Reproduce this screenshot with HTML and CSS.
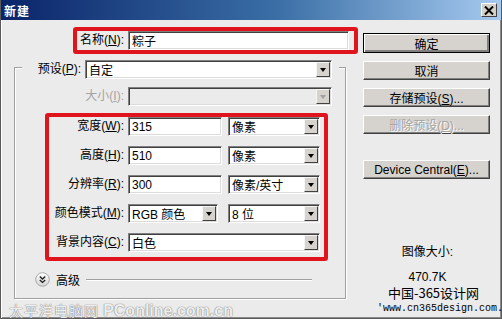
FILE: index.html
```html
<!DOCTYPE html>
<html lang="zh-CN">
<head>
  <meta charset="UTF-8"/>
  <title>新建</title>
  <link rel="stylesheet" href="styles.css">
</head>
<body>
  <div class="window">
    <div class="titlebar">
      <span class="title">新建</span>
      <span class="close">
        <svg width="10" height="9" viewBox="0 0 10 9"><path d="M1 0.5 L9 8.5 M9 0.5 L1 8.5" stroke="#000" stroke-width="2"/></svg>
      </span>
    </div>

    <div class="content">
      <div class="main">
        <div class="name-box">
          <label class="lbl name-lbl">名称(<u>N</u>):</label>
          <div class="field name-field">粽子</div>
        </div>

        <div class="group">
          <div class="preset-row">
            <label class="lbl preset-lbl">预设(<u>P</u>):</label>
            <div class="select preset-select"><span>自定</span><i class="arrow"></i></div>
          </div>

          <div class="row size-row">
            <label class="lbl size-lbl disabled">大小(<u>I</u>):</label>
            <div class="select size-select off"><span></span><i class="arrow"></i></div>
          </div>

          <div class="red-box">
            <div class="row">
              <label class="lbl">宽度(<u>W</u>):</label>
              <div class="field num">315</div>
              <div class="select unit"><span>像素</span><i class="arrow"></i></div>
            </div>
            <div class="row">
              <label class="lbl">高度(<u>H</u>):</label>
              <div class="field num">510</div>
              <div class="select unit"><span>像素</span><i class="arrow"></i></div>
            </div>
            <div class="row">
              <label class="lbl">分辨率(<u>R</u>):</label>
              <div class="field num">300</div>
              <div class="select unit"><span>像素/英寸</span><i class="arrow"></i></div>
            </div>
            <div class="row">
              <label class="lbl">颜色模式(<u>M</u>):</label>
              <div class="select mode"><span>RGB 颜色</span><i class="arrow"></i></div>
              <div class="select unit"><span>8 位</span><i class="arrow"></i></div>
            </div>
            <div class="row">
              <label class="lbl">背景内容(<u>C</u>):</label>
              <div class="select wide"><span>白色</span><i class="arrow"></i></div>
            </div>
          </div>

          <div class="advanced">
            <svg class="adv-icon" width="15" height="15" viewBox="0 0 15 15">
              <defs>
                <linearGradient id="g" x1="0" y1="0" x2="0" y2="1">
                  <stop offset="0" stop-color="#ffffff"/>
                  <stop offset="1" stop-color="#d2d2d2"/>
                </linearGradient>
              </defs>
              <circle cx="7.5" cy="7.5" r="6.8" fill="url(#g)" stroke="#a8a8a8"/>
              <path d="M4.8 4.6 L7.5 7 L10.2 4.6 M4.8 8 L7.5 10.4 L10.2 8" fill="none" stroke="#222" stroke-width="1.4"/>
            </svg>
            <span class="adv-text">高级</span>
            <span class="adv-line"></span>
          </div>
        </div>
      </div>

      <div class="side">
        <button class="btn default">确定</button>
        <button class="btn">取消</button>
        <button class="btn">存储预设(<u>S</u>)...</button>
        <button class="btn" disabled>删除预设(<u>D</u>)...</button>
        <button class="btn device">Device Central(<u>E</u>)...</button>

        <div class="info">
          <div class="info-title">图像大小:</div>
          <div class="info-size">470.7K</div>
          <div class="mark-cn">中国-365设计网</div>
          <div class="mark-url">'www.cn365design.com.</div>
        </div>
      </div>

      <div class="watermark">太平洋电脑网 <b>PConline.com.cn</b></div>
    </div>
  </div>
</body>
</html>
```

FILE: styles.css
```css
:root {
  --face: #ebebeb;
  --btn-face: #d6d3ce;
  --red: #e0141c;
  --ui-font: 12px "Liberation Sans", "Noto Sans CJK SC", sans-serif;
}

*, *::before, *::after { box-sizing: border-box; }

body {
  margin: 0;
  background: var(--face);
  font: var(--ui-font);
  color: #000;
}

u { text-decoration: underline; text-underline-offset: 1px; }

.window {
  width: 502px;
  height: 319px;
  background: var(--face);
  border: 1px solid #5a5a5a;
  border-top: 0;
  box-shadow: inset 1px 0 0 #fff, inset -1px -1px 0 #8a8a8a;
  overflow: hidden;
}

/* title bar */
.titlebar {
  height: 20px;
  display: flex;
  align-items: center;
  justify-content: space-between;
  padding: 0 4px 0 3px;
  background: linear-gradient(to right, #0a246a 0%, #3a6ea5 55%, #a6caf0 100%);
}

.title {
  color: #fff;
  font-weight: bold;
  font-size: 12px;
  letter-spacing: 1px;
}

.close {
  width: 16px;
  height: 14px;
  display: flex;
  align-items: center;
  justify-content: center;
  background: #d4d0c8;
  border: 1px solid;
  border-color: #fff #404040 #404040 #fff;
}

/* body */
.content {
  position: relative;
  display: flex;
  height: 298px;
}

.main { width: 360px; }

.lbl {
  text-align: right;
  white-space: nowrap;
  padding-right: 4px;
  line-height: 19px;
}

.disabled { color: #a3a3a3; }

.field, .select {
  height: 19px;
  background: #fff;
  border: 1px solid;
  border-color: #808080 #fff #fff #808080;
  box-shadow: inset 1px 1px 0 #404040, inset -1px -1px 0 #dcdcdc;
  display: flex;
  align-items: center;
  padding-left: 3px;
  white-space: nowrap;
}

.select { padding-right: 1px; }

.arrow {
  margin-left: auto;
  width: 14px;
  height: 15px;
  background: var(--btn-face);
  border: 1px solid;
  border-color: #f6f6f6 #404040 #404040 #f6f6f6;
  display: flex;
  align-items: center;
  justify-content: center;
}

.arrow::after {
  content: "";
  border-left: 3.5px solid transparent;
  border-right: 3.5px solid transparent;
  border-top: 4px solid #000;
}

.select.off { background: var(--face); }
.select.off .arrow::after { border-top-color: #a0a0a0; }

/* name */
.name-box {
  margin: 7px 0 0 72px;
  width: 285px;
  height: 27px;
  border: 4px solid var(--red);
  border-radius: 3px;
  display: flex;
  align-items: center;
}

.name-lbl { width: 51px; }
.name-field { width: 221px; }

/* group */
.group {
  margin: 13px 0 0 13px;
  width: 332px;
  height: 232px;
  border: 1px solid #a0a0a0;
  box-shadow: 1px 1px 0 #fff, inset 1px 1px 0 #fff;
}

.preset-row {
  display: flex;
  margin: -8px 6px 0 7px;
  background: var(--face);
  position: relative;
}

.preset-lbl { width: 63px; }
.preset-select { width: 247px; }

.row { display: flex; }

.size-row { margin-top: 8px; }
.size-lbl { width: 113px; }
.size-select { width: 204px; }

.red-box {
  margin: 7px 0 0 30px;
  width: 283px;
  border: 4px solid var(--red);
  border-radius: 3px;
  padding: 0 0 5px;
  display: flex;
  flex-direction: column;
  gap: 10px;
}

.red-box .lbl { width: 79px; }
.red-box .num { width: 94px; }
.red-box .unit { width: 92px; margin-left: 6px; }
.red-box .mode { width: 90px; }
.red-box .mode + .unit { margin-left: 10px; }
.red-box .wide { width: 192px; }

.advanced {
  display: flex;
  align-items: center;
  margin: 10px 33px 0 20px;
}

.adv-text { margin-left: 6px; }

.adv-line {
  flex: 1;
  margin-left: 6px;
  height: 1px;
  background: #a0a0a0;
  box-shadow: 0 1px 0 #fff;
}

/* buttons */
.side {
  width: 127px;
  margin-left: 2px;
  padding-top: 13px;
  display: flex;
  flex-direction: column;
}

.btn {
  font: var(--ui-font);
  height: 19px;
  padding: 0;
  margin-bottom: 8px;
  background: var(--btn-face);
  border: 1px solid;
  border-color: #fff #404040 #404040 #fff;
  box-shadow: inset -1px -1px 0 #808080;
  color: #000;
}

.btn.default {
  height: 20px;
  border: 1px solid #000;
  box-shadow: inset 1px 1px 0 #fff, inset -2px -2px 0 #808080;
}

.btn:disabled {
  color: #a3a3a3;
  text-shadow: 1px 1px 0 #fff;
}

.btn.device { margin-top: 18px; }

.info {
  text-align: center;
  padding-left: 2px;
}

.info-title { margin-top: 58px; line-height: 14px; }
.info-size { margin-top: 11px; line-height: 14px; }

.mark-cn {
  margin-top: 1px;
  font: 13px "Noto Sans CJK SC", sans-serif;
  line-height: 15px;
  padding-left: 12px;
}

.mark-url {
  margin-top: 2px;
  font: 10px "Liberation Mono", monospace;
  line-height: 13px;
  padding-left: 12px;
  white-space: nowrap;
}

/* site watermark laid over the bottom edge */
.watermark {
  position: absolute;
  left: 8px;
  top: 280px;
  font: 14px "Noto Sans CJK SC", sans-serif;
  color: rgba(255, 255, 255, 0.9);
  text-shadow: 0 0 1px #7a7a7a, 0 0 1px #7a7a7a;
  white-space: nowrap;
  letter-spacing: 1px;
}

.watermark b {
  font: bold 16px "Liberation Sans", sans-serif;
  letter-spacing: 0;
}
```
